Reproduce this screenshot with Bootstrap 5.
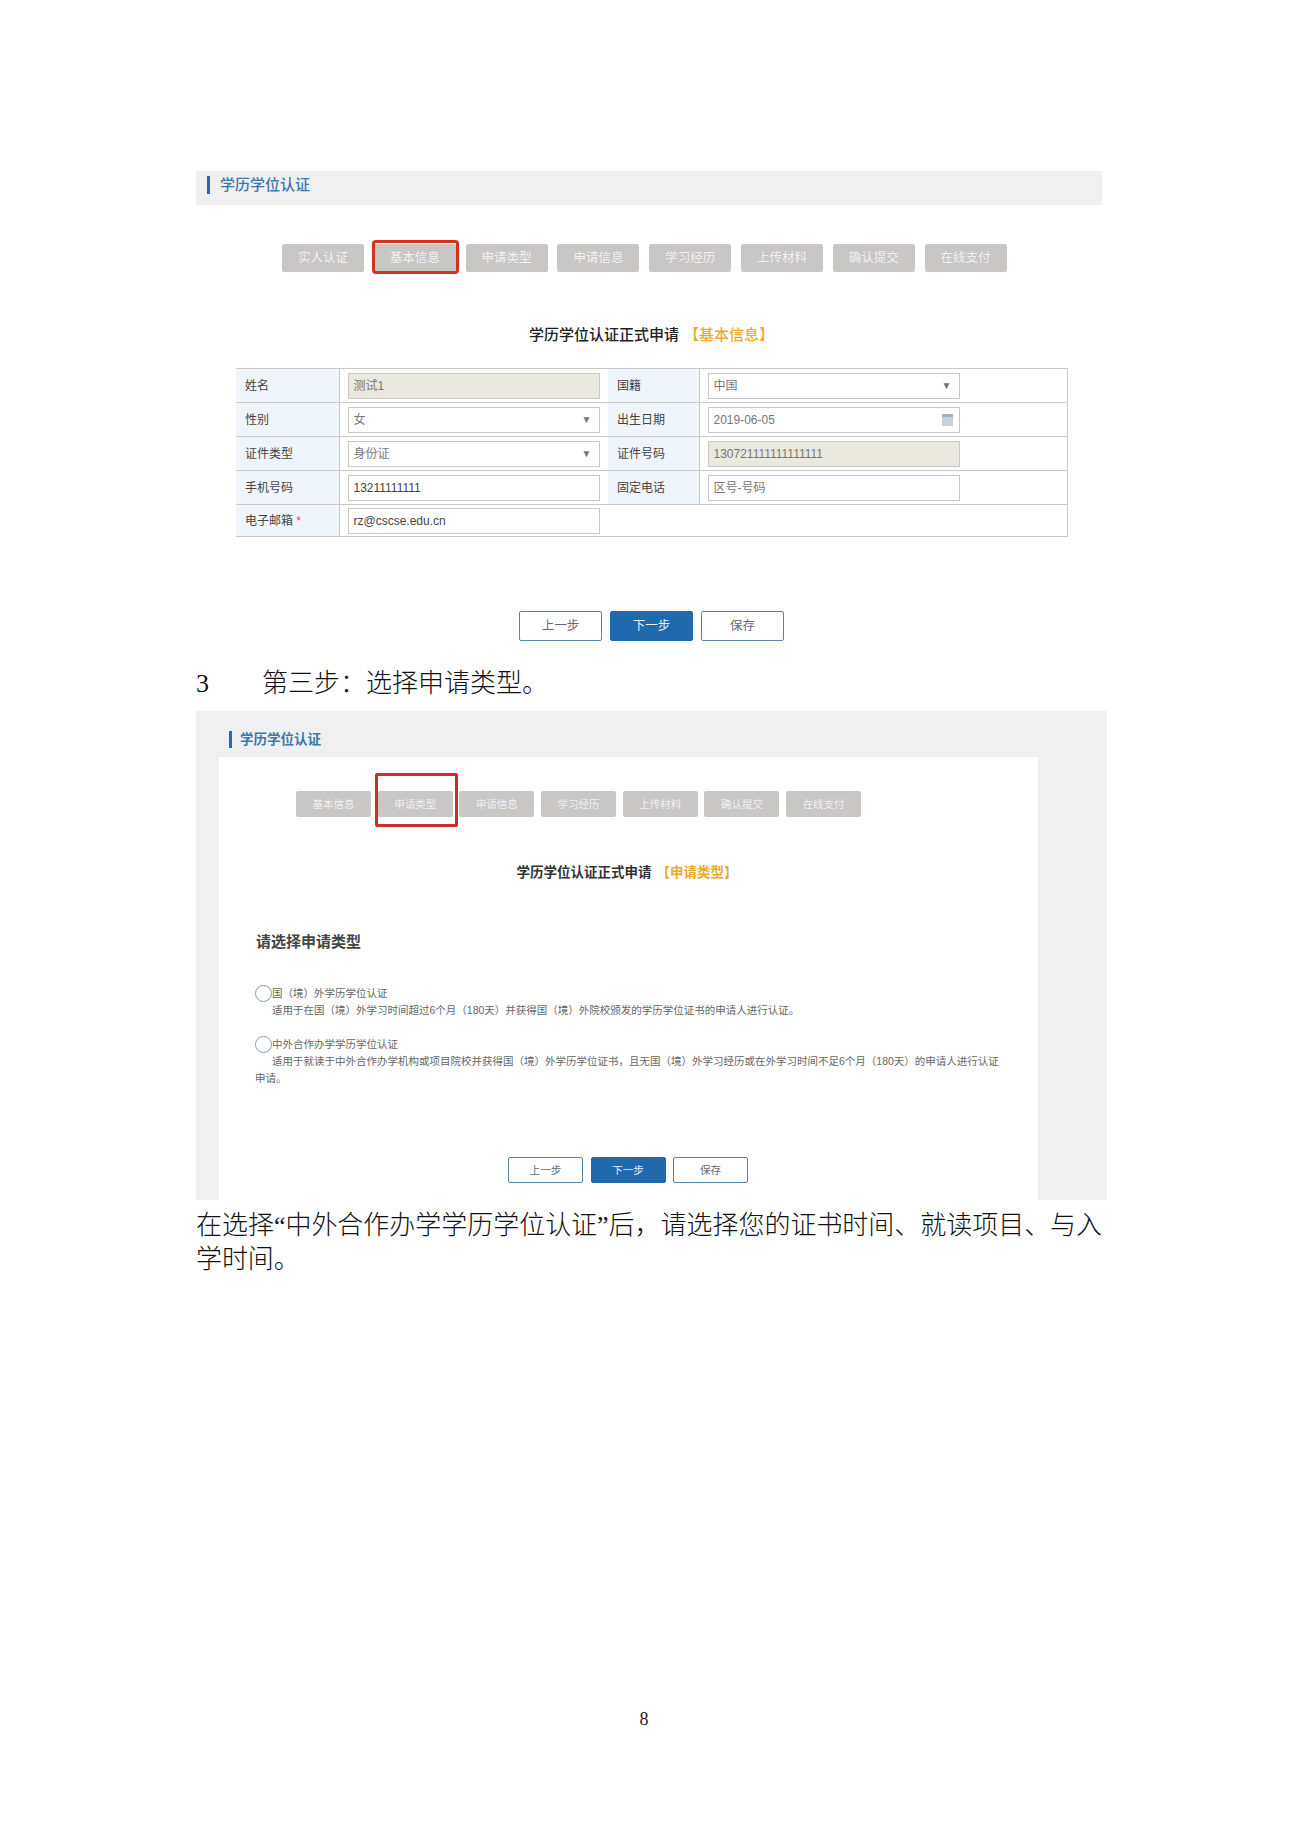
<!DOCTYPE html>
<html lang="zh">
<head>
<meta charset="utf-8">
<title>学历学位认证</title>
<link href="https://cdn.jsdelivr.net/npm/bootstrap@5.3.0/dist/css/bootstrap.min.css" rel="stylesheet">
<style>
body{background:#fff;font-family:"Liberation Sans","Noto Sans CJK SC",sans-serif;color:#333;height:1837px;overflow:hidden}
.sheet{width:911px;margin-left:196px;padding-top:171px}
.head-bar{height:34px;width:906px;background:#f0f0f0;padding:5px 0 0 11px;margin-bottom:39px}
.head-title{border-left:3px solid #2a69ac;padding-left:10px;font-size:15px;line-height:17px;color:#3b78ad;font-weight:500;display:block;height:18px}
.steps-a{margin-left:86px;gap:9.8px;margin-bottom:53px}
.step{width:82px;height:28px;background:#c9c6c6;color:#f1f1f1;font-size:12.5px;line-height:28px;text-align:center;border-radius:2px;position:relative}
.step.now::after{content:"";position:absolute;left:-2px;right:-3px;top:-4px;bottom:-2px;border:3px solid #d8301f;border-radius:4px}
.form-title{font-size:15px;font-weight:500;color:#222;text-align:center;line-height:20px}
.form-title span{color:#eba92e;margin-left:5px}
.form-title.main{margin-bottom:23px}
.info-grid{width:832px;margin:0 0 0 40px;border-collapse:collapse;table-layout:fixed;font-size:12px;color:#555}
.info-grid .c1{width:103px}
.info-grid .c2{width:269px}
.info-grid .c3{width:91px}
.info-grid .c4{width:260px}
.info-grid td{height:34px;border-top:1px solid #c9c9c9;border-bottom:1px solid #c9c9c9;padding:0;vertical-align:middle}
.info-grid td:last-child{border-right:1px solid #c9c9c9}
.info-grid tr:last-child td{height:32px}
.info-grid td.lab{background:#eff5fb;padding-left:9px;color:#444;border-right:1px solid #c9c9c9}
.fld{width:252px;height:26px;margin-left:8px;border:1px solid #c8c8c8;background:#fff;font-size:12px;line-height:24px;padding:0 5px;color:#777;display:flex;justify-content:space-between;align-items:center}
.fld.off{background:#e9e9df}
.fld.dark{color:#444}
.arrow{color:#777;font-size:10px;margin-right:2px}
.star{color:#d9534f}
.cal{width:11px;height:12px;margin-right:1px;background:#c6d3df;border-top:3px solid #9fb2c4}
.btns-a{margin:74px 0 0 323px;gap:8px}
.pbtn{height:30px;width:83px;font-size:12.5px;line-height:28px;padding:0;border:1px solid #5a84a8;border-radius:2px;background:#fff;color:#667;text-align:center}
.pbtn.go{background:#2069ad;border-color:#2069ad;color:#e8f0f8}
.doc-line{font-family:"Liberation Serif","Noto Sans CJK SC",serif;font-weight:300;font-size:26px;line-height:34px;color:#111;width:906px;margin:0}
.step-line{margin-top:26px;display:flex}
.step-line b{font-weight:300;width:66px}
.shot{width:911px;height:489px;margin-top:10px;background:#f0f0f0;padding:0 69px 0 23px;margin-bottom:9px}
.shot-head{height:46px;padding:20px 0 0 10px}
.shot-head .head-title{font-weight:700;font-size:13.5px;height:17px;padding-left:8px}
.shot-in{background:#fff;height:443px;padding-top:34px}
.steps-b{margin-left:77px;gap:6.7px;height:26px}
.steps-b .step{width:75px;height:26px;line-height:26px;font-size:10.5px}
.steps-b .step.now::after{left:-3px;right:-5px;top:-18px;bottom:-10px;border:3px solid #c9302c;border-radius:2px}
.shot .form-title{font-size:13.5px;font-weight:700;margin:46px 0 0 -3px;color:#333}
.pick-head{font-size:15px;font-weight:700;color:#444;margin:49px 0 0 37px;line-height:20px}
.pick{font-size:10.5px;line-height:17px;color:#666;margin:0 36px 0 36px}
.pick-one{margin-top:33px}
.pick-two{margin-top:17px}
.pick-row{display:flex;align-items:center}
.dot{width:17px;height:17px;border:1px solid #8a9bab;border-radius:50%;background:#fff;flex:none}
.pick p{margin:0;text-indent:17px}
.btns-b{margin:70px 0 0 289px;gap:7.5px}
.btns-b .pbtn{width:75px;height:26px;line-height:24px;font-size:10.5px}
.para{text-align:justify;letter-spacing:-.1px}
.pg{width:100%;text-align:center;margin-top:432px;font-family:"Liberation Serif",serif;font-size:18px;line-height:20px;color:#222;padding-right:11px}
.pg-wrap{width:1299px;margin-left:-196px}
</style>
</head>
<body>
<div class="sheet">
  <div class="head-bar"><span class="head-title">学历学位认证</span></div>
  <div class="d-flex steps-a">
    <div class="step">实人认证</div><div class="step now">基本信息</div><div class="step">申请类型</div><div class="step">申请信息</div><div class="step">学习经历</div><div class="step">上传材料</div><div class="step">确认提交</div><div class="step">在线支付</div>
  </div>
  <div class="form-title main">学历学位认证正式申请<span>【基本信息】</span></div>
  <table class="info-grid">
    <colgroup><col class="c1"><col class="c2"><col class="c3"><col class="c4"><col></colgroup>
    <tr><td class="lab">姓名</td><td><div class="fld off">测试1</div></td><td class="lab">国籍</td><td><div class="fld">中国<span class="arrow">▼</span></div></td><td></td></tr>
    <tr><td class="lab">性别</td><td><div class="fld">女<span class="arrow">▼</span></div></td><td class="lab">出生日期</td><td><div class="fld">2019-06-05<span class="cal"></span></div></td><td></td></tr>
    <tr><td class="lab">证件类型</td><td><div class="fld">身份证<span class="arrow">▼</span></div></td><td class="lab">证件号码</td><td><div class="fld off">130721111111111111</div></td><td></td></tr>
    <tr><td class="lab">手机号码</td><td><div class="fld dark">13211111111</div></td><td class="lab">固定电话</td><td><div class="fld">区号-号码</div></td><td></td></tr>
    <tr><td class="lab">电子邮箱 <span class="star">*</span></td><td><div class="fld dark">rz@cscse.edu.cn</div></td><td colspan="3"></td></tr>
  </table>
  <div class="d-flex btns-a">
    <div class="pbtn">上一步</div><div class="pbtn go">下一步</div><div class="pbtn">保存</div>
  </div>
  <p class="doc-line step-line"><b>3</b>第三步：选择申请类型。</p>
  <div class="shot">
    <div class="shot-head"><span class="head-title">学历学位认证</span></div>
    <div class="shot-in">
      <div class="d-flex steps-b">
        <div class="step">基本信息</div><div class="step now">申请类型</div><div class="step">申请信息</div><div class="step">学习经历</div><div class="step">上传材料</div><div class="step">确认提交</div><div class="step">在线支付</div>
      </div>
      <div class="form-title">学历学位认证正式申请<span>【申请类型】</span></div>
      <div class="pick-head">请选择申请类型</div>
      <div class="pick pick-one">
        <div class="pick-row"><span class="dot"></span><span>国（境）外学历学位认证</span></div>
        <p>适用于在国（境）外学习时间超过6个月（180天）并获得国（境）外院校颁发的学历学位证书的申请人进行认证。</p>
      </div>
      <div class="pick pick-two">
        <div class="pick-row"><span class="dot"></span><span>中外合作办学学历学位认证</span></div>
        <p>适用于就读于中外合作办学机构或项目院校并获得国（境）外学历学位证书，且无国（境）外学习经历或在外学习时间不足6个月（180天）的申请人进行认证申请。</p>
      </div>
      <div class="d-flex btns-b">
        <div class="pbtn">上一步</div><div class="pbtn go">下一步</div><div class="pbtn">保存</div>
      </div>
    </div>
  </div>
  <p class="doc-line para">在选择“中外合作办学学历学位认证”后，请选择您的证书时间、就读项目、与入学时间。</p>
  <div class="pg-wrap"><div class="pg">8</div></div>
</div>
<script src="https://cdn.jsdelivr.net/npm/bootstrap@5.3.0/dist/js/bootstrap.bundle.min.js"></script>
</body>
</html>
